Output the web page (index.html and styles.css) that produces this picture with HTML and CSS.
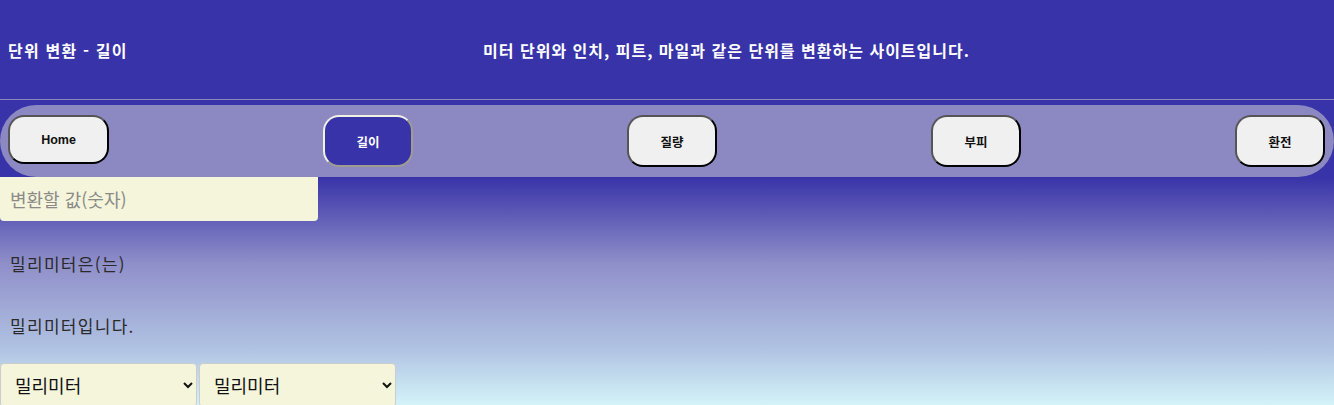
FILE: index.html
```html
<!DOCTYPE html>
<html lang="ko">
<head>
<meta charset="utf-8">
<title>단위 변환 - 길이</title>
<link rel="stylesheet" href="styles.css">
</head>
<body>
<header class="header">
  <h1 class="title">단위 변환 - 길이</h1>
  <p class="desc">미터 단위와 인치, 피트, 마일과 같은 단위를 변환하는 사이트입니다.</p>
</header>
<nav class="nav">
  <button class="nav-btn home">Home</button>
  <button class="nav-btn active">길이</button>
  <button class="nav-btn">질량</button>
  <button class="nav-btn">부피</button>
  <button class="nav-btn">환전</button>
</nav>
<main class="main">
  <input class="value-input" type="text" placeholder="변환할 값(숫자)">
  <p class="line first">밀리미터은(는)</p>
  <p class="line second">밀리미터입니다.</p>
  <div class="selects">
    <select class="unit-select"><option>밀리미터</option><option>센티미터</option><option>미터</option></select>
    <select class="unit-select"><option>밀리미터</option><option>센티미터</option><option>미터</option></select>
  </div>
</main>
</body>
</html>
```
FILE: styles.css
```css
html, body {
  margin: 0;
  padding: 0;
}
body {
  background: #3833a8;
  font-family: "Noto Sans CJK KR", "Noto Sans", "Liberation Sans", sans-serif;
  height: 405px;
  overflow: hidden;
}
.header {
  height: 99px;
  border-bottom: 1px solid #8a87b8;
  display: flex;
  align-items: center;
  padding: 0 8px;
  color: #ffffff;
}
.title {
  margin: 0;
  font-size: 16px;
  letter-spacing: 1.2px;
  font-weight: bold;
  width: 360px;
  flex: none;
}
.desc {
  margin: 0;
  font-size: 16px;
  letter-spacing: 1px;
  font-weight: bold;
  flex: 1;
  text-align: center;
  padding-right: 241px;
}
.nav {
  margin-top: 5px;
  height: 72px;
  background: #8c88c2;
  border-radius: 36px;
  display: flex;
  align-items: flex-start;
  justify-content: space-between;
  padding: 10px 9px 0 8px;
  box-sizing: border-box;
}
.nav-btn {
  width: 90px;
  height: 52px;
  background: #f0f0f0;
  border: 2px solid;
  border-color: #555555 #000000 #000000 #555555;
  border-radius: 16px;
  font-family: "Liberation Sans", "Noto Sans CJK KR", sans-serif;
  font-size: 12.5px;
  font-weight: bold;
  color: #111111;
  padding: 0;
}
.nav-btn.home {
  width: 101px;
  height: 49px;
}
.nav-btn.active {
  background: #3833a8;
  color: #ffffff;
  border-color: #f2f2e2 #9f9d90 #9f9d90 #f2f2e2;
}
.main {
  height: 228px;
  background: linear-gradient(#3833a8 0%, #8f8fc9 38%, #b0c2e2 75%, #d3f3f8 100%);
  display: flex;
  flex-direction: column;
  align-items: flex-start;
}
.value-input {
  width: 318px;
  height: 44px;
  flex: none;
  box-sizing: border-box;
  background: #f5f5dc;
  border: none;
  border-radius: 0 0 4px 4px;
  padding: 0 10px;
  font-family: "Noto Sans CJK KR", sans-serif;
  font-size: 18px;
  color: #333333;
}
.value-input::placeholder {
  color: #8a8a86;
}
.line {
  margin: 0;
  padding-left: 10px;
  font-size: 17px;
  letter-spacing: 1.3px;
  line-height: 19px;
  color: #2a2a2a;
}
.line.first {
  margin-top: 33px;
}
.line.second {
  margin-top: 43px;
}
.selects {
  margin-top: 28px;
  display: flex;
  gap: 2px;
}
.unit-select {
  width: 197px;
  height: 44px;
  background: #f5f5dc;
  border: 1px solid #cccccc;
  border-radius: 4px;
  padding: 0 10px;
  font-family: "Noto Sans CJK KR", sans-serif;
  font-size: 18px;
  color: #111111;
}
```
